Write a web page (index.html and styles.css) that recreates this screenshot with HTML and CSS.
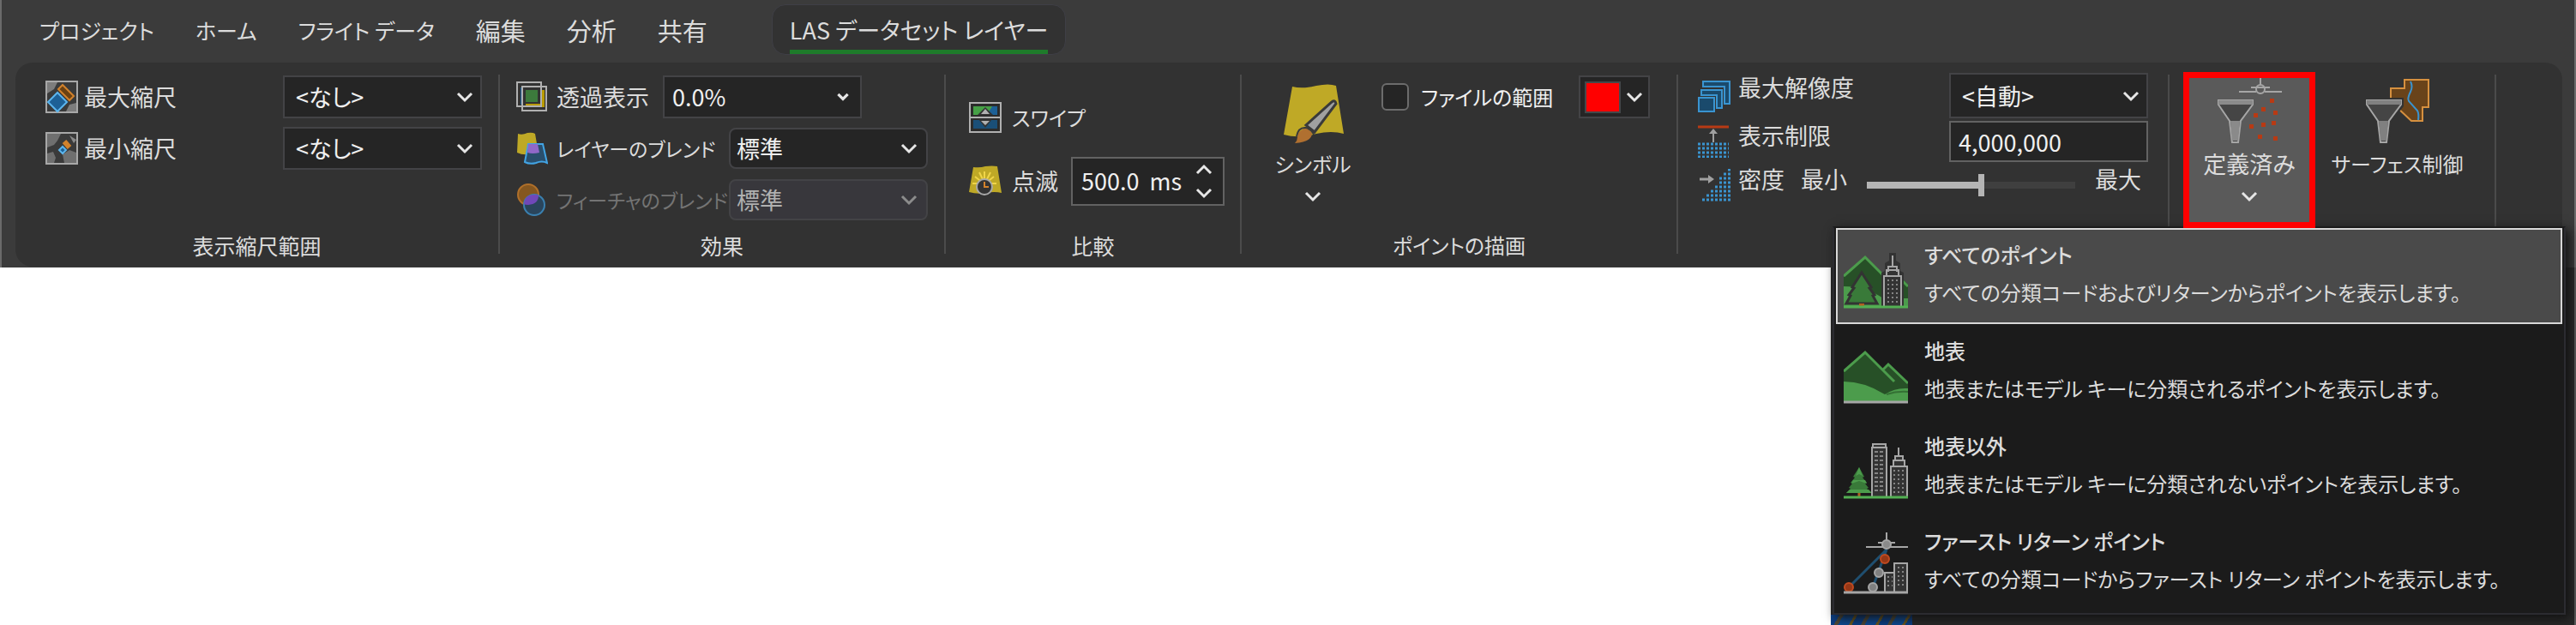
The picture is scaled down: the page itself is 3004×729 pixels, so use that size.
FILE: index.html
```html
<!DOCTYPE html>
<html lang="ja">
  <head>
    <meta charset="UTF-8" />
    <meta name="viewport" content="width=device-width, initial-scale=1.0" />
    <title>LAS データセット レイヤー</title>
    <link rel="stylesheet" href="styles.css">
  </head>
  <body>
    <header class="ribbon">
      <nav class="tabs">
        <a href="#" class="tab">プロジェクト</a>
        <a href="#" class="tab">ホーム</a>
        <a href="#" class="tab">フライト データ</a>
        <a href="#" class="tab kanji">編集</a>
        <a href="#" class="tab kanji">分析</a>
        <a href="#" class="tab kanji">共有</a>
        <a href="#" class="tab active"><span>LAS データセット レイヤー</span></a>
      </nav>

      <div class="panel">
        <!-- Visibility range -->
        <section class="group scale-group">
          <div class="rows">
            <div class="row">
              <svg class="icon" viewBox="0 0 38 38">
                <rect x="1" y="1" width="36" height="36" fill="#3a3a3a" stroke="#a8a8a8" stroke-width="2" />
                <path d="M2 2h12l-4 8-8 5zM36 26v10H24l4-8z" fill="#7d7d7d" />
                <path d="M14 14l11 11-11 11L3 25z" fill="#1d6096" stroke="#5bb5ee" stroke-width="2" />
                <path d="M20 5l13 13-5 5-13-13z" fill="#6b4112" stroke="#d2822c" stroke-width="2" />
              </svg>
              <label for="maxScale">最大縮尺</label>
              <div class="select">
                <select id="maxScale"><option>&lt;なし&gt;</option></select>
                <svg class="chevron" viewBox="0 0 20 14"><path d="M2 3l8 8 8-8" /></svg>
              </div>
            </div>
            <div class="row">
              <svg class="icon" viewBox="0 0 38 38">
                <rect x="1" y="1" width="36" height="36" fill="#3a3a3a" stroke="#a8a8a8" stroke-width="2" />
                <path d="M2 2h16l-4 8-4 5-8 3zM20 26l8-5 8 3v12H22zM2 25l7-2 3 7-2 6H2z" fill="#6f6f6f" />
                <path d="M28 4l8 5-3 4z" fill="#8a8a8a" />
                <path d="M20 17l4 4-4 4-4-4z" fill="#1d6096" stroke="#5bb5ee" stroke-width="2" />
                <path d="M22 11l6 7" stroke="#d2822c" stroke-width="6" />
              </svg>
              <label for="minScale">最小縮尺</label>
              <div class="select">
                <select id="minScale"><option>&lt;なし&gt;</option></select>
                <svg class="chevron" viewBox="0 0 20 14"><path d="M2 3l8 8 8-8" /></svg>
              </div>
            </div>
          </div>
          <h2>表示縮尺範囲</h2>
        </section>
        <div class="divider"></div>

        <!-- Effects -->
        <section class="group effects-group">
          <div class="rows">
            <div class="row">
              <svg class="icon" viewBox="0 0 38 38">
                <path d="M30 11h4v20H12v-4h18z" fill="#b89a00" />
                <path d="M7 8v20" stroke="#1d6096" stroke-width="2" />
                <rect x="12" y="11" width="14" height="14" fill="#3c7a3c" />
                <rect x="2" y="2" width="28" height="28" fill="none" stroke="#b0b0b0" stroke-width="2" />
                <rect x="8" y="7" width="28" height="28" fill="none" stroke="#b0b0b0" stroke-width="2" />
              </svg>
              <label for="opacity" class="opacity-label">透過表示</label>
              <div class="select">
                <select id="opacity"><option>0.0%</option></select>
                <svg class="chevron small" viewBox="0 0 20 14"><path d="M3 3l7 7 7-7" /></svg>
              </div>
            </div>
            <div class="row">
              <svg class="icon" viewBox="0 0 38 38">
                <path d="M3 2q5 2 11-1 6-1 9 1l4 23q-5-1-11 1-8 1-14-2z" fill="#bfa926" />
                <path d="M15 14h17l5 22q-6-3-13 0-7 2-13-1z" fill="#2a4f6d" stroke="#42a4e4" stroke-width="2" />
                <path d="M15 14h11l2 10q-8 2-14 0z" fill="#9068c8" />
              </svg>
              <label for="layerBlend" class="kana">レイヤーのブレンド</label>
              <div class="select round">
                <select id="layerBlend"><option>標準</option></select>
                <svg class="chevron" viewBox="0 0 20 14"><path d="M2 3l8 8 8-8" /></svg>
              </div>
            </div>
            <div class="row disabled">
              <svg class="icon" viewBox="0 0 38 38">
                <circle cx="15" cy="13" r="12" fill="#855720" stroke="#b0702a" stroke-width="2" />
                <circle cx="22" cy="25" r="12" fill="#2a455c" stroke="#3a80b0" stroke-width="2" />
                <path d="M10 24q1-11 12-11 5 0 5 1 0 10-12 11-4 0-5-1z" fill="#7048b8" />
              </svg>
              <label for="featureBlend" class="kana">フィーチャのブレンド</label>
              <div class="select round">
                <select id="featureBlend" disabled><option>標準</option></select>
                <svg class="chevron" viewBox="0 0 20 14"><path d="M2 3l8 8 8-8" /></svg>
              </div>
            </div>
          </div>
          <h2>効果</h2>
        </section>
        <div class="divider"></div>

        <!-- Compare -->
        <section class="group compare-group">
          <div class="rows">
            <button type="button" class="row swipe">
              <svg class="icon" viewBox="0 0 38 38">
                <path d="M1 2h36v34H1z" fill="#2b2b2b" stroke="#b0b0b0" stroke-width="2" />
                <path d="M5 6h28v10H5z" fill="#1d6096" />
                <path d="M5 6h22l-6 10H5z" fill="#46a046" />
                <path d="M5 22h28v10H5z" fill="#1a4f78" />
                <path d="M10 16l9-9 9 9zM11 21l8 10 8-10z" fill="#333" />
                <path d="M14 15l5-6 5 6zM14 23l5 5 5-5z" fill="#b0b0b0" />
                <path d="M1 19h36" stroke="#b0b0b0" stroke-width="2" />
              </svg>
              <span class="kana">スワイプ</span>
            </button>
            <div class="row">
              <svg class="icon" viewBox="0 0 38 38">
                <path d="M5 3q8 1 14-1 8-1 14 0l5 31q-8-2-18 0-10 2-20-1z" fill="#bfa926" />
                <path d="M18 8v12M7 14l10 8M29 14l-10 8M12 9l6 12M25 9l-6 12M4 22h28" stroke="#f0d548" stroke-width="2" />
                <circle cx="18" cy="26" r="9" fill="#333" stroke="#a8a8a8" stroke-width="2" />
                <path d="M18 20v6h5" fill="none" stroke="#d2822c" stroke-width="2" />
              </svg>
              <label for="flicker">点滅</label>
              <div class="spin">
                <input type="text" id="flicker" value="500.0  ms" />
                <div class="spin-buttons">
                  <button type="button" aria-label="増やす"><svg class="chevron" viewBox="0 0 20 14"><path d="M2 11l8-8 8 8" /></svg></button>
                  <button type="button" aria-label="減らす"><svg class="chevron" viewBox="0 0 20 14"><path d="M2 3l8 8 8-8" /></svg></button>
                </div>
              </div>
            </div>
          </div>
          <h2>比較</h2>
        </section>
        <div class="divider"></div>

        <!-- Point drawing -->
        <section class="group drawing-group">
          <div class="columns">
            <button type="button" class="big-button">
              <svg class="big-icon" viewBox="0 0 78 78">
                <path d="M15 10q12 3 28-1 15-3 23 0l9 56q-14-4-32 0-20 6-38 1z" fill="#bfa926" />
                <path d="M61 28q4-3 5 2L41 63l-10-8z" fill="#a0a0a0" stroke="#3a3a3a" stroke-width="3" />
                <path d="M27 60q5-4 11 4 0 11-20 12 3-3 3-7 0-6 6-9z" fill="#b07030" />
                <path d="M20 68q2-11 11-10 7 2 9 8" fill="none" stroke="#3a3a3a" stroke-width="2" />
              </svg>
              <span class="kana">シンボル</span>
              <svg class="chevron" viewBox="0 0 20 14"><path d="M2 3l8 8 8-8" /></svg>
            </button>
            <div class="extent-row">
              <input type="checkbox" id="extent" />
              <label for="extent" class="kana">ファイルの範囲</label>
              <button type="button" class="color-picker" aria-label="色">
                <span class="swatch"></span>
                <svg class="chevron" viewBox="0 0 20 14"><path d="M2 3l8 8 8-8" /></svg>
              </button>
            </div>
          </div>
          <h2 class="kana">ポイントの描画</h2>
        </section>
        <div class="divider"></div>

        <!-- Point density -->
        <section class="group density-group">
          <div class="row">
            <svg class="icon" viewBox="0 0 38 38">
              <g fill="#1a4a6c" stroke="#3a94d0" stroke-width="2">
                <path d="M6 8V2h31v26h-6V8z" />
                <path d="M4 18v-6h24v21h-6V18z" />
                <path d="M1 21h18v16H1z" />
              </g>
            </svg>
            <label for="resolution">最大解像度</label>
            <div class="select">
              <select id="resolution"><option>&lt;自動&gt;</option></select>
              <svg class="chevron" viewBox="0 0 20 14"><path d="M2 3l8 8 8-8" /></svg>
            </div>
          </div>
          <div class="row limit-row">
            <svg class="icon" viewBox="0 0 38 38">
              <path d="M0 2h36" stroke="#b83a14" stroke-width="3" />
              <path d="M18 20V8" stroke="#a0a0a0" stroke-width="2" />
              <path d="M13 10l5-6 5 6z" fill="#a0a0a0" />
              <path d="M0 22h36M0 27h36M0 32h36M0 37h36" stroke="#3a94d0" stroke-width="3" stroke-dasharray="3 2" />
            </svg>
            <label for="limit">表示制限</label>
            <input type="text" id="limit" class="text-box" value="4,000,000" />
          </div>
          <div class="row slider-row">
            <svg class="icon" viewBox="0 0 38 38">
              <path d="M2 12h12" stroke="#a0a0a0" stroke-width="3" />
              <path d="M12 7l7 5-7 5z" fill="#a0a0a0" />
              <path d="M35 1h3M30 6h8M25 11h13M25 16h13M20 21h18M15 26h23M10 31h28M5 36h33" stroke="#3a94d0" stroke-width="3" stroke-dasharray="3 2" />
            </svg>
            <label for="density">密度</label>
            <span class="slider-end">最小</span>
            <input type="range" id="density" min="0" max="100" value="55" />
            <span class="slider-end">最大</span>
          </div>
        </section>
        <div class="divider"></div>

        <!-- Filters -->
        <section class="group filter-group">
          <button type="button" class="big-button selected">
            <svg class="big-icon" viewBox="0 0 78 78">
              <path d="M52 0v8M27 16h20M57 16h20M41 11h22" stroke="#a6a6a6" stroke-width="2" />
              <circle cx="52" cy="13" r="5" fill="none" stroke="#a6a6a6" stroke-width="2" />
              <path d="M3 26h40v5L29 50l-3 25h-7l-3-25L3 31z" fill="#454545" stroke="#a6a6a6" stroke-width="2" />
              <path d="M3 26h40v5H3zM17 50h11l-2 23h-7z" fill="#8a8a8a" />
              <path d="M63 24h5v5h-5zM53 34h5v5h-5zM67 38h5v5h-5zM44 41h5v5h-5zM65 50h5v5h-5zM53 52h5v5h-5zM39 54h5v5h-5zM49 66h5v5h-5zM67 68h5v5h-5z" fill="#b83a14" />
            </svg>
            <span>定義済み</span>
            <svg class="chevron" viewBox="0 0 20 14"><path d="M2 3l8 8 8-8" /></svg>
          </button>
          <button type="button" class="big-button surface">
            <svg class="big-icon" viewBox="0 0 78 78">
              <path d="M31 26V12h16V2h28v32h-7v16H55L38 34z" fill="#69431a" stroke="#d6903f" stroke-width="2" />
              <path d="M54 4q3 6 0 12-4 8-2 11l10 11q2 4 1 11" fill="none" stroke="#3a94d0" stroke-width="2" />
              <path d="M0 23h46v10L32 51l-3 27H16l-3-27L0 32z" fill="#323232" />
              <path d="M3 26h40v5L29 50l-3 25h-7l-3-25L3 31z" fill="#454545" stroke="#a6a6a6" stroke-width="2" />
              <path d="M3 26h40v5H3zM17 50h11l-2 23h-7z" fill="#808080" />
            </svg>
            <span class="kana">サーフェス制御</span>
          </button>
        </section>
        <div class="divider"></div>
      </div>

      <!-- Predefined filter list -->
      <div class="menu">
        <button type="button" class="menu-item current">
          <svg class="menu-icon" viewBox="0 0 75 75">
            <path d="M0 38l25-23 27 27 10-10 13 15v27H0z" fill="#275027" />
            <path d="M0 37l25-22 22 22M66 40l9 9" fill="none" stroke="#4c9c4c" stroke-width="3" />
            <path d="M0 49q26 0 46 14h29v11H0z" fill="#4c9c4c" />
            <path d="M21 33l11 17-2 1 6 8-2 1 5 9H3l5-9-2-1 6-8-2-1z" fill="#397a39" stroke="#333" stroke-width="3" />
            <path d="M18 69h6v3h-6z" fill="#b06020" />
            <path d="M44 74V33l4-2v-9l5-3v-9h8v9l5 3v9l4 2v41z" fill="#333" />
            <path d="M57 13v12M52 32v-6h10v6M50 36v-6h14v6M47 73V37h20v36" fill="none" stroke="#a6a6a6" stroke-width="2" />
            <path d="M51 42h13M51 47h13M51 52h13M51 57h13M51 62h13M51 67h13" stroke="#858585" stroke-width="2" stroke-dasharray="2 3" />
            <path d="M0 73h75" stroke="#53b053" stroke-width="3" />
          </svg>
          <span class="menu-text">
            <strong>すべてのポイント</strong>
            <span>すべての分類コードおよびリターンからポイントを表示します。</span>
          </span>
        </button>
        <button type="button" class="menu-item">
          <svg class="menu-icon" viewBox="0 0 75 75">
            <path d="M0 37l25-23 21 21 6-6 23 22v22H0z" fill="#275027" />
            <path d="M0 37l25-22 34 34M46 35l6-6 23 22" fill="none" stroke="#4c9c4c" stroke-width="3" />
            <path d="M0 49q24 0 48 15 12-8 27-7v15H0z" fill="#4c9c4c" />
            <path d="M50 64q12-4 25-3" fill="none" stroke="#347034" stroke-width="2" />
            <path d="M0 73h75" stroke="#a6a6a6" stroke-width="3" />
          </svg>
          <span class="menu-text">
            <strong>地表</strong>
            <span>地表またはモデル キーに分類されるポイントを表示します。</span>
          </span>
        </button>
        <button type="button" class="menu-item">
          <svg class="menu-icon" viewBox="0 0 75 75">
            <path d="M18 38l6 11-2 1 5 6-2 1 4 5-2 1 5 5H3l5-5-2-1 4-5-2-1 5-6-2-1z" fill="#397a39" />
            <path d="M18 38l-4 10 4-2 4 2zM9 57l9-3 9 3-2-4H11zM3 68h30l-4-4H7z" fill="#4c9c4c" />
            <path d="M18 68v5" stroke="#b06020" stroke-width="3" />
            <path d="M33 72V15h17v57M34 15v-4h15v4M64 15v11M60 30v-5h9v5M58 36v-6h13v6M55 72V37h19v35" fill="#333" stroke="#a6a6a6" stroke-width="2" />
            <path d="M36 20h12M36 25h12M36 30h12M36 35h12M36 40h12M36 45h12M36 50h12M36 55h12M36 60h12M36 65h12" stroke="#858585" stroke-width="2" stroke-dasharray="4 2" />
            <path d="M58 42h13M58 47h13M58 52h13M58 57h13M58 62h13M58 67h13" stroke="#858585" stroke-width="2" stroke-dasharray="2 3" />
            <path d="M0 73h75" stroke="#53b053" stroke-width="3" />
          </svg>
          <span class="menu-text">
            <strong>地表以外</strong>
            <span>地表またはモデル キーに分類されないポイントを表示します。</span>
          </span>
        </button>
        <button type="button" class="menu-item">
          <svg class="menu-icon" viewBox="0 0 75 75">
            <path d="M6 67l44-44-16 44" fill="none" stroke="#1f4f70" stroke-width="3" />
            <path d="M50 3v10M26 20h49M40 15h20" stroke="#a6a6a6" stroke-width="2" />
            <circle cx="50" cy="17" r="5" fill="#8a8a8a" stroke="#a6a6a6" stroke-width="2" />
            <path d="M48 72V50h11v22M59 72V39h15v33" fill="#333" stroke="#a6a6a6" stroke-width="2" />
            <path d="M51 55h6M51 60h6M51 65h6M63 44h9M63 49h9M63 54h9M63 59h9M63 64h9" stroke="#858585" stroke-width="2" stroke-dasharray="2 3" />
            <circle cx="48" cy="34" r="5" fill="#963817" stroke="#c04a20" stroke-width="2" />
            <circle cx="6" cy="67" r="5" fill="#963817" stroke="#c04a20" stroke-width="2" />
            <circle cx="41" cy="50" r="5" fill="#808080" stroke="#a6a6a6" stroke-width="2" />
            <circle cx="34" cy="67" r="5" fill="#808080" stroke="#a6a6a6" stroke-width="2" />
            <path d="M0 73h75" stroke="#a6a6a6" stroke-width="3" />
          </svg>
          <span class="menu-text">
            <strong>ファースト リターン ポイント</strong>
            <span>すべての分類コードからファースト リターン ポイントを表示します。</span>
          </span>
        </button>
      </div>
    </header>

    <main class="workspace">
      <div class="view">
        <div class="map-strip"></div>
      </div>
    </main>
  </body>
</html>
```
FILE: styles.css
```css
* {
  box-sizing: border-box;
}
body {
  display: flex;
  flex-direction: column;
  min-height: 100vh;
  margin: 0;
  background-color: #fff;
  color: #dcdcdc;
  font-family: "Noto Sans CJK JP", "Noto Sans", sans-serif;
  font-size: 27px;
  line-height: 34px;
  font-feature-settings: "palt";
  white-space: nowrap;
}
button,
input,
select {
  margin: 0;
  color: inherit;
  font: inherit;
  font-feature-settings: inherit;
}
button {
  padding: 0;
  border: none;
  background: none;
  white-space: nowrap;
  cursor: pointer;
}
svg {
  display: block;
  flex: none;
}
h2 {
  margin: auto 0 12px;
  font-size: 25px;
  font-weight: normal;
  line-height: 26px;
  text-align: center;
}

/* Ribbon */
.ribbon {
  position: relative;
  padding: 0 14px 1px 16px;
  background-color: #3b3b3b;
  border-left: 2px solid #6a6a6a;
  border-right: 2px solid #6a6a6a;
}
.tabs {
  display: flex;
  align-items: center;
  gap: 48px;
  height: 73px;
  padding: 0 28px 4px;
  font-size: 25px;
}
.tab {
  color: inherit;
  text-decoration: none;
}
.tab.kanji {
  font-size: 29px;
}
.tab.active {
  margin-left: 27px;
  padding: 0 20px;
  border: 1px solid #3f3f46;
  border-radius: 16px;
  background-color: #323232;
  font-size: 27px;
}
.tab.active span {
  display: block;
  padding-top: 6px;
  border-bottom: 5px solid #1e7b2a;
  line-height: 46px;
}
.panel {
  display: flex;
  min-height: 238px;
  border-radius: 20px;
  background-color: #323232;
}
.divider {
  flex: none;
  width: 2px;
  margin: 14px 0 15px;
  background-color: #4b4b4b;
}
.group {
  display: flex;
  flex: none;
  flex-direction: column;
  padding-top: 15px;
}
.rows {
  display: flex;
  flex-direction: column;
  gap: 10px;
}
.row {
  display: flex;
  align-items: center;
  height: 50px;
}
.icon {
  width: 38px;
  height: 38px;
}
.kana {
  font-size: 24px;
}
.disabled {
  color: #747474;
}

/* Controls */
.chevron {
  width: 20px;
  height: 14px;
  fill: none;
  stroke: #e6e6e6;
  stroke-width: 3px;
}
.select {
  display: grid;
  align-items: center;
  width: 232px;
  height: 50px;
}
.select > * {
  grid-area: 1 / 1;
}
.select select {
  width: 100%;
  height: 100%;
  padding: 0 13px;
  border: 2px solid #434346;
  background-color: #252525;
  color: #f0f0f0;
  appearance: none;
}
.select .chevron {
  justify-self: end;
  margin-right: 10px;
  pointer-events: none;
}
.select .chevron.small {
  width: 16px;
  margin-right: 14px;
  stroke-width: 4px;
}
.select.round {
  height: 48px;
  margin-left: auto;
}
.select.round select {
  padding: 0 7px;
  border-radius: 8px;
}
.select.round .chevron {
  margin-right: 12px;
}
.disabled .select select {
  background-color: #38373c;
  color: #b0b0b0;
  opacity: 1;
}
.disabled .chevron {
  stroke: #8c8c8c;
}

/* Groups */
.scale-group {
  width: 563px;
}
.scale-group .rows {
  padding: 0 19px 0 35px;
}
.scale-group .row {
  gap: 7px;
}
.scale-group .select {
  margin-left: auto;
}
.effects-group {
  width: 518px;
}
.effects-group .rows {
  padding: 0 19px 0 18px;
}
.effects-group label {
  flex: none;
  margin-left: 10px;
}
.effects-group .kana {
  font-size: 23px;
}
.effects-group .opacity-label {
  width: 124px;
}
.opacity-label + .select select {
  padding: 0 9px;
}
.compare-group {
  width: 343px;
  padding-top: 39px;
}
.compare-group .rows {
  gap: 24px;
  padding: 0 18px 0 27px;
}
.compare-group .row {
  gap: 12px;
}
.spin {
  display: flex;
  align-items: center;
  width: 179px;
  height: 57px;
  margin-left: auto;
  border: 2px solid #626262;
  background-color: #252525;
}
.spin input {
  width: 130px;
  padding: 0 0 0 10px;
  border: none;
  background: none;
  color: #f0f0f0;
}
.spin-buttons {
  display: flex;
  flex: 1;
  flex-direction: column;
  align-items: center;
  gap: 13px;
}
.big-button {
  display: flex;
  flex-direction: column;
  align-items: center;
}
.big-button span {
  margin: 5px 0 14px;
}
.big-icon {
  width: 78px;
  height: 78px;
}
.drawing-group {
  width: 507px;
}
.drawing-group .columns {
  display: flex;
  align-items: flex-start;
  gap: 23px;
  padding: 0 31px 0 26px;
}
.drawing-group .big-button {
  width: 114px;
  padding-top: 3px;
}
.extent-row {
  display: flex;
  flex: 1;
  align-items: center;
  gap: 14px;
}
.extent-row input {
  width: 32px;
  height: 32px;
  border: 2px solid #6c6c6c;
  border-radius: 6px;
  background-color: #252525;
  appearance: none;
}
.extent-row label {
  color: #f0f0f0;
}
.color-picker {
  display: flex;
  align-items: center;
  gap: 6px;
  width: 83px;
  height: 50px;
  margin-left: auto;
  padding-left: 5px;
  border: 2px solid #434346;
  background-color: #252525;
}
.swatch {
  width: 42px;
  height: 37px;
  border: 2px solid #44484a;
  background-color: #f00;
}
.density-group {
  width: 571px;
  gap: 3px;
  padding: 12px 23px 0;
}
.density-group .row {
  align-items: flex-start;
  gap: 9px;
  height: 53px;
}
.density-group .icon {
  align-self: center;
}
.density-group .select {
  height: 53px;
  margin-left: auto;
}
.density-group .limit-row,
.density-group .slider-row {
  height: 48px;
}
.text-box {
  width: 232px;
  height: 48px;
  margin-left: auto;
  padding: 0 9px;
  border: 2px solid #626262;
  background-color: #252525;
  color: #f0f0f0;
}
.slider-end:first-of-type {
  margin-left: 10px;
}
.slider-end:last-of-type {
  margin-right: 8px;
}
.slider-row input {
  flex: 1;
  height: 26px;
  margin: 11px 14px 0;
  background: linear-gradient(to right, #b4b4b4 55%, #3f3f3f 55%) center / 100% 8px no-repeat;
  appearance: none;
}
.slider-row input::-webkit-slider-thumb {
  width: 7px;
  height: 26px;
  background-color: #b4b4b4;
  appearance: none;
}
.filter-group {
  flex-direction: row;
  align-items: flex-start;
  width: 379px;
  padding: 11px 18px 0 16px;
}
.big-button.selected {
  position: relative;
  z-index: 2;
  width: 154px;
  height: 182px;
  border: 7px solid #f00;
  background-color: #5a5a5a;
}
.big-button.surface {
  flex: 1;
  padding-top: 7px;
}

/* Menu */
.menu {
  position: absolute;
  z-index: 1;
  top: 264px;
  right: 10px;
  width: 855px;
  padding: 0 2px 4px;
  border: 2px solid #2c2c31;
  border-top-color: #1b1b1b;
  background-color: #1b1b1b;
  box-shadow: 4px 4px 12px #111;
}
.menu-item {
  display: flex;
  align-items: center;
  gap: 19px;
  width: 100%;
  height: 111px;
  padding: 0 7px;
  border: 2px solid transparent;
  text-align: left;
}
.menu-item.current {
  height: 112px;
  border-color: #d8d8d8;
  background-color: #4a4a4a;
}
.menu-icon {
  width: 75px;
  height: 75px;
}
.menu-text {
  display: flex;
  flex-direction: column;
  padding-bottom: 6px;
  font-size: 24px;
  line-height: 44px;
}
.menu-text strong {
  font-weight: 500;
}

/* Area below the ribbon */
.workspace {
  display: flex;
  flex: 1;
  justify-content: flex-end;
}
.view {
  display: flex;
  align-items: flex-end;
  width: 869px;
  border-right: 2px solid #5a5a5a;
  background-color: #282828;
}
.map-strip {
  width: 95px;
  height: 12px;
  background: repeating-linear-gradient(120deg, #0b3f86 0 9px, #4d4a3a 9px 13px, #0d4a94 13px 24px, #6b5820 24px 27px);
}
```
